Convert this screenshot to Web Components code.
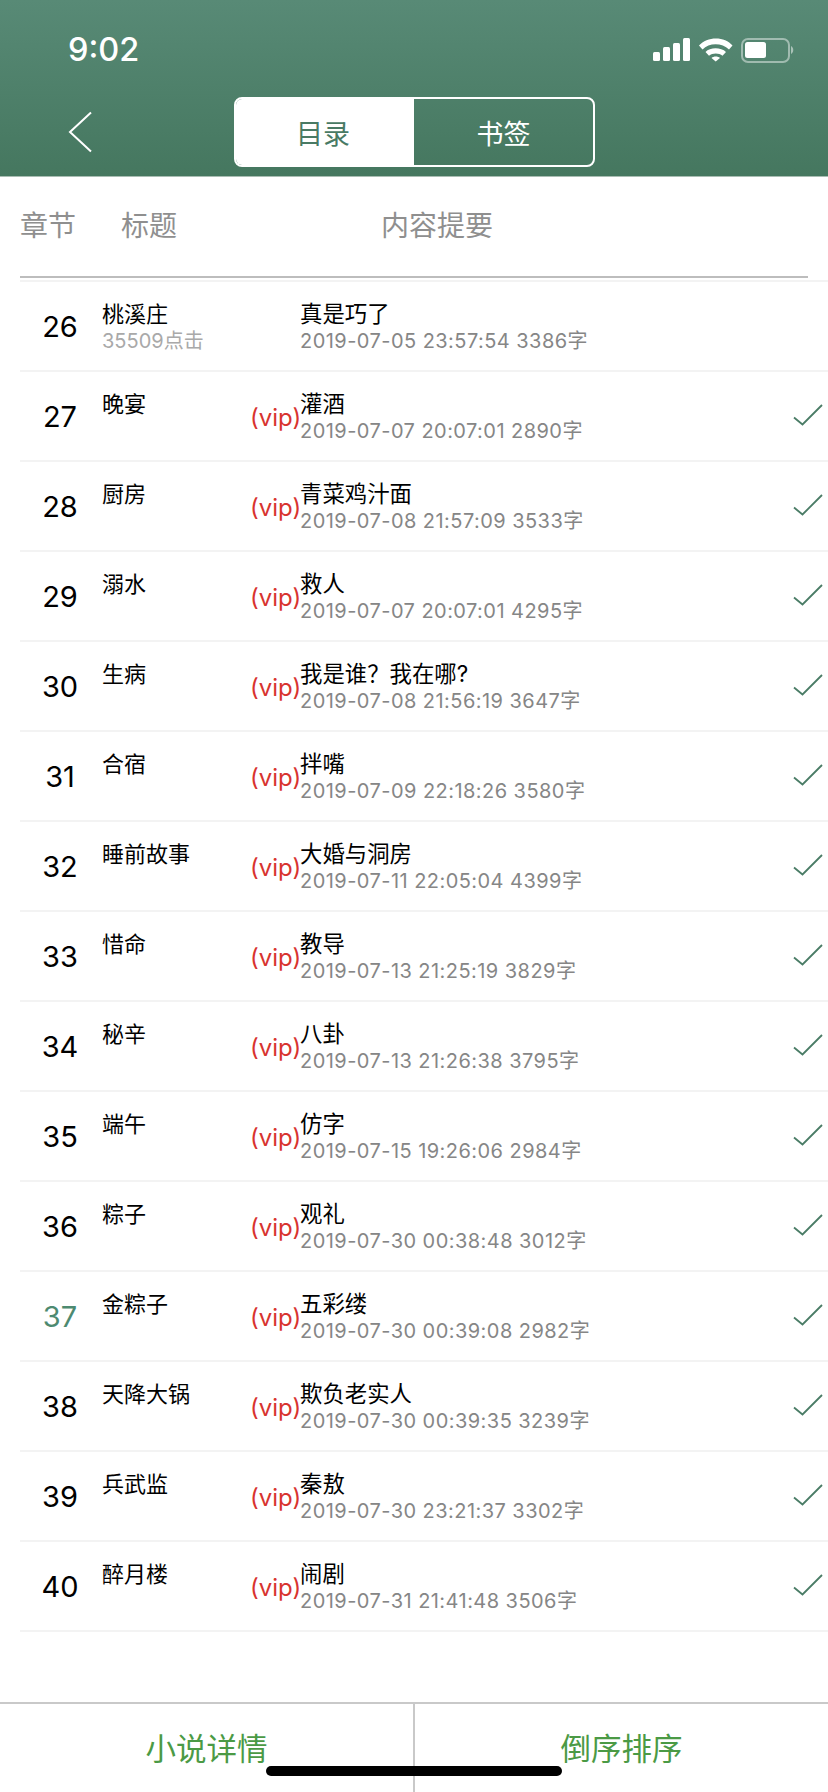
<!DOCTYPE html>
<html lang="zh-CN">
<head>
<meta charset="utf-8">
<title>目录</title>
<style>
  html, body { margin: 0; padding: 0; background: #fff; }
  body { font-family: Inter, "Noto Sans CJK SC", sans-serif; }
</style>
</head>
<body>
<toc-page>
  <nav-header slot="header"></nav-header>
  <column-head slot="header"></column-head>
  <chapter-row num="26" extra="35509点击" title-text="桃溪庄" summary="真是巧了" meta="2019-07-05 23:57:54 3386字"></chapter-row>
  <chapter-row num="27" vip read title-text="晚宴" summary="灌酒" meta="2019-07-07 20:07:01 2890字"></chapter-row>
  <chapter-row num="28" vip read title-text="厨房" summary="青菜鸡汁面" meta="2019-07-08 21:57:09 3533字"></chapter-row>
  <chapter-row num="29" vip read title-text="溺水" summary="救人" meta="2019-07-07 20:07:01 4295字"></chapter-row>
  <chapter-row num="30" vip read title-text="生病" summary="我是谁？我在哪?" meta="2019-07-08 21:56:19 3647字"></chapter-row>
  <chapter-row num="31" vip read title-text="合宿" summary="拌嘴" meta="2019-07-09 22:18:26 3580字"></chapter-row>
  <chapter-row num="32" vip read title-text="睡前故事" summary="大婚与洞房" meta="2019-07-11 22:05:04 4399字"></chapter-row>
  <chapter-row num="33" vip read title-text="惜命" summary="教导" meta="2019-07-13 21:25:19 3829字"></chapter-row>
  <chapter-row num="34" vip read title-text="秘辛" summary="八卦" meta="2019-07-13 21:26:38 3795字"></chapter-row>
  <chapter-row num="35" vip read title-text="端午" summary="仿字" meta="2019-07-15 19:26:06 2984字"></chapter-row>
  <chapter-row num="36" vip read title-text="粽子" summary="观礼" meta="2019-07-30 00:38:48 3012字"></chapter-row>
  <chapter-row num="37" vip read current title-text="金粽子" summary="五彩缕" meta="2019-07-30 00:39:08 2982字"></chapter-row>
  <chapter-row num="38" vip read title-text="天降大锅" summary="欺负老实人" meta="2019-07-30 00:39:35 3239字"></chapter-row>
  <chapter-row num="39" vip read title-text="兵武监" summary="秦敖" meta="2019-07-30 23:21:37 3302字"></chapter-row>
  <chapter-row num="40" vip read title-text="醉月楼" summary="闹剧" meta="2019-07-31 21:41:48 3506字"></chapter-row>
  <bottom-tabs slot="footer"></bottom-tabs>
</toc-page>

<script>
const pageTemplate = document.createElement("template");
pageTemplate.innerHTML = `
  <style>
    :host {
      display: flex;
      flex-direction: column;
      position: relative;
      width: 828px;
      height: 1792px;
      overflow: hidden;
      background: #fff;
    }
    .list { flex: 1; min-height: 0; }
    .home {
      position: absolute;
      left: 266px;
      top: 1766px;
      width: 296px;
      height: 10px;
      border-radius: 5px;
      background: #000;
    }
  </style>
  <slot name="header"></slot>
  <div class="list"><slot></slot></div>
  <slot name="footer"></slot>
  <div class="home"></div>
`;

class TocPage extends HTMLElement {
  constructor() {
    super();
    this.attachShadow({ mode: "open" }).appendChild(pageTemplate.content.cloneNode(true));
  }
}
customElements.define("toc-page", TocPage);

const headerTemplate = document.createElement("template");
headerTemplate.innerHTML = `
  <style>
    :host {
      display: block;
      height: 177px;
      box-sizing: border-box;
      color: #fff;
      background: linear-gradient(#588a76, #45775f);
      border-bottom: 1px solid #a9bdb3;
    }
    .status {
      height: 97px;
      box-sizing: border-box;
      display: flex;
      justify-content: space-between;
      padding: 31px 33px 0 68px;
    }
    .time { font: 500 32.500px/38px Inter, sans-serif; }
    .icons { display: block; margin-top: 6px; }
    .bar {
      display: flex;
      align-items: flex-start;
      padding-left: 68px;
    }
    .back { display: block; margin-top: 14px; width: 26px; height: 42px; }
    .seg {
      display: grid;
      grid-template-columns: 178px 1fr;
      width: 361px;
      height: 70px;
      box-sizing: border-box;
      margin-left: 140px;
      border: 2px solid #fff;
      border-radius: 8px;
      font-size: 27px;
      overflow: hidden;
    }
    .seg div {
      box-sizing: border-box;
      display: flex;
      align-items: center;
      justify-content: center;
    }
    .seg .on { background: #fff; color: #497a64; padding-right: 4px; }
  </style>
  <div class="status">
    <span class="time">9:02</span>
    <svg class="icons" width="142" height="26" viewBox="0 0 142 26">
      <g fill="#fff">
        <rect x="0" y="15" width="7" height="9" rx="1.5"/>
        <rect x="10" y="10" width="7" height="14" rx="1.5"/>
        <rect x="20" y="6" width="7" height="18" rx="1.5"/>
        <rect x="30" y="1" width="7" height="23" rx="1.5"/>
        <path d="M46 8.500 C54 -1 72 -1 79.500 8.500 L76 12.500 C69 5.500 56 5.500 49.500 12.500 Z"/>
        <path d="M52.500 15 C57 10 68 10 73 15 L69.500 18.800 C66 15.800 59.500 15.800 56 18.800 Z"/>
        <path d="M58.500 21 C60.500 19 65 19 67 21 L62.700 24.500 Z"/>
        <rect x="92" y="5" width="21" height="16" rx="2.500"/>
      </g>
      <rect x="89" y="2" width="47" height="23" rx="6" fill="none" stroke="#fff" stroke-opacity=".45" stroke-width="2"/>
      <path d="M138 9 C141 10.500 141 15.500 138 17 Z" fill="#fff" fill-opacity=".5"/>
    </svg>
  </div>
  <div class="bar">
    <svg class="back" viewBox="0 0 26 42">
      <path d="M23 1.500 L2 21 L23 40.500" fill="none" stroke="#fff" stroke-width="2"/>
    </svg>
    <div class="seg">
      <div class="on">目录</div>
      <div>书签</div>
    </div>
  </div>
`;

class NavHeader extends HTMLElement {
  constructor() {
    super();
    this.attachShadow({ mode: "open" }).appendChild(headerTemplate.content.cloneNode(true));
  }
}
customElements.define("nav-header", NavHeader);

const columnTemplate = document.createElement("template");
columnTemplate.innerHTML = `
  <style>
    :host {
      display: block;
      height: 105px;
      box-sizing: border-box;
      padding-left: 20px;
    }
    .cols {
      height: 101px;
      box-sizing: border-box;
      padding-top: 29px;
      display: flex;
      width: 788px;
      border-bottom: 2px solid #bdbdbd;
      font-size: 28px;
      line-height: 40px;
      color: #8f8f8f;
    }
    .a { width: 101px; }
    .b { width: 260px; }
    .rule { height: 2px; margin-top: 2px; background: #f3f3f3; }
  </style>
  <div class="cols">
    <span class="a">章节</span>
    <span class="b">标题</span>
    <span>内容提要</span>
  </div>
  <div class="rule"></div>
`;

class ColumnHead extends HTMLElement {
  constructor() {
    super();
    this.attachShadow({ mode: "open" }).appendChild(columnTemplate.content.cloneNode(true));
  }
}
customElements.define("column-head", ColumnHead);

const rowTemplate = document.createElement("template");
rowTemplate.innerHTML = `
  <style>
    :host {
      display: flex;
      height: 90px;
      box-sizing: border-box;
      margin-left: 20px;
      border-bottom: 2px solid #f3f3f3;
    }
    .num {
      width: 80px;
      padding-top: 25px;
      text-align: center;
      font-size: 29px;
      line-height: 40px;
      color: #000;
    }
    :host([current]) .num { color: #4d8a70; }
    .title {
      width: 148px;
      padding-left: 2px;
      padding-top: 17px;
      font-size: 22px;
      line-height: 30px;
      color: #000;
    }
    .extra {
      font-size: 20px;
      line-height: 24px;
      color: #a9a9a9;
    }
    .vip {
      width: 50px;
      padding-top: 30px;
      font-size: 24px;
      line-height: 32px;
      color: #d8332f;
      white-space: nowrap;
    }
    .text { flex: 1; padding-top: 17px; }
    .summary { font-size: 22.400px; line-height: 30px; color: #000; }
    .meta { font-size: 20px; line-height: 24px; letter-spacing: .45px; color: #868686; white-space: nowrap; }
    .check { display: block; margin: 32px 5px 0 0; }
  </style>
  <div class="num"></div>
  <div class="title"><div class="name"></div><div class="extra"></div></div>
  <div class="vip"></div>
  <div class="text"><div class="summary"></div><div class="meta"></div></div>
  <svg class="check" width="30" height="23" viewBox="0 0 30 23">
    <path d="M1 13.500 L9.500 20.500 L29 1" fill="none" stroke="#4a7c66" stroke-width="1.800"/>
  </svg>
`;

class ChapterRow extends HTMLElement {
  constructor() {
    super();
    this.attachShadow({ mode: "open" }).appendChild(rowTemplate.content.cloneNode(true));
  }

  connectedCallback() {
    const root = this.shadowRoot;
    root.querySelector(".num").textContent = this.getAttribute("num");
    root.querySelector(".name").textContent = this.getAttribute("title-text");
    root.querySelector(".extra").textContent = this.getAttribute("extra") || "";
    root.querySelector(".summary").textContent = this.getAttribute("summary");
    root.querySelector(".meta").textContent = this.getAttribute("meta");
    root.querySelector(".vip").textContent = this.hasAttribute("vip") ? "(vip)" : "";
    root.querySelector(".check").style.visibility = this.hasAttribute("read") ? "visible" : "hidden";
  }
}
customElements.define("chapter-row", ChapterRow);

const tabsTemplate = document.createElement("template");
tabsTemplate.innerHTML = `
  <style>
    :host {
      display: flex;
      height: 90px;
      box-sizing: border-box;
      border-top: 2px solid #c9c9c9;
      font-size: 30.500px;
      color: #4b9a45;
    }
    div {
      flex: 1;
      text-align: center;
      padding-top: 23px;
      line-height: 44px;
    }
    div + div { border-left: 2px solid #c9c9c9; }
  </style>
  <div>小说详情</div>
  <div>倒序排序</div>
`;

class BottomTabs extends HTMLElement {
  constructor() {
    super();
    this.attachShadow({ mode: "open" }).appendChild(tabsTemplate.content.cloneNode(true));
  }
}
customElements.define("bottom-tabs", BottomTabs);
</script>
</body>
</html>
